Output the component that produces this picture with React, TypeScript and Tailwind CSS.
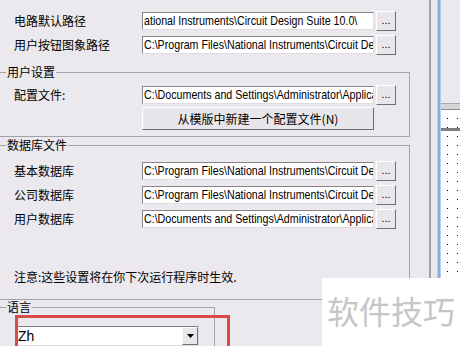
import type { ReactNode } from 'react'

const cjk = "font-['Noto_Sans_CJK_SC',sans-serif]"
const latin = "font-['Liberation_Sans',Arial,sans-serif]"

function PathInput({ value }: { value: string }) {
  return (
    <div className={`h-[18px] w-[232px] overflow-hidden whitespace-nowrap border border-[#858585] border-r-[#dedce0] border-b-[#dedce0] bg-white pl-[1px] text-[13px] leading-[16px] text-black ${latin}`}>
      {/* в оригинале узкий шрифт — сжимаем обычный */}
      <span className="inline-block origin-left scale-x-[0.82]">{value}</span>
    </div>
  )
}

function BrowseButton() {
  return (
    <div className={`ml-[2px] flex h-[20px] w-[20px] items-end justify-center border border-t-white border-l-white border-r-[#6f6f6f] border-b-[#6f6f6f] bg-[#e8e6ea] pb-[4px] text-[11px] leading-none text-black ${latin}`}>
      ...
    </div>
  )
}

function PathRow({ label, value }: { label: string; value: string }) {
  return (
    <div className="flex h-[20px] items-center pl-[14px]">
      <span className={`w-[128px] text-[12px] leading-[16px] text-black ${cjk}`}>{label}</span>
      <PathInput value={value} />
      <BrowseButton />
    </div>
  )
}

function Group({ title, className, children }: { title: string; className?: string; children: ReactNode }) {
  return (
    <div className={className}>
      <div className="flex h-[12px]">
        <div className="mt-[6px] w-[6px] border-t border-[#a3a2a6]" />
        <span className={`px-[1px] text-[12px] leading-[12px] text-black ${cjk}`}>{title}</span>
        <div className="mt-[6px] flex-1 border-t border-r border-[#a3a2a6]" />
      </div>
      <div className="border-r border-b border-[#a3a2a6]">{children}</div>
    </div>
  )
}

// точечная сетка справа — кусок холста схемы
function Dots({ id, dy, className }: { id: string; dy: number; className?: string }) {
  return (
    <svg className={`block w-full bg-white ${className ?? ''}`}>
      <defs>
        <pattern id={id} width="10" height="9" patternUnits="userSpaceOnUse">
          <rect x="6" y={dy} width="1" height="1" fill="#000" />
        </pattern>
      </defs>
      <rect width="100%" height="100%" fill={`url(#${id})`} />
    </svg>
  )
}

export default function App() {
  return (
    <div className="relative flex h-[346px] w-[460px] overflow-hidden bg-[#ebe9ed]">
      <div className="w-[429px] shrink-0 pt-[11px] pr-[19px]">
        <PathRow label="电路默认路径" value="ational Instruments\Circuit Design Suite 10.0\" />
        <div className="mt-[4px]">
          <PathRow label="用户按钮图象路径" value="C:\Program Files\National Instruments\Circuit Design Suite 10.0\" />
        </div>

        <Group title="用户设置" className="mt-[11px]">
          <div className="pt-[7px] pb-[6px]">
            <PathRow label="配置文件:" value="C:\Documents and Settings\Administrator\Application Data\" />
            <div className="mt-[2px] pl-[142px]">
              <div className={`flex h-[23px] w-[232px] items-center justify-center border border-t-white border-l-white border-r-[#6f6f6f] border-b-[#6f6f6f] bg-[#e8e6ea] text-[12px] text-black ${cjk}`}>
                从模版中新建一个配置文件(N)
              </div>
            </div>
          </div>
        </Group>

        <Group title="数据库文件" className="mt-[2px]">
          <div className="flex flex-col gap-[4px] pt-[10px]">
            <PathRow label="基本数据库" value="C:\Program Files\National Instruments\Circuit Design Suite 10.0\" />
            <PathRow label="公司数据库" value="C:\Program Files\National Instruments\Circuit Design Suite 10.0\" />
            <PathRow label="用户数据库" value="C:\Documents and Settings\Administrator\Application Data\" />
          </div>
          <p className={`mt-[40px] pb-[14px] pl-[14px] text-[12px] leading-[16px] text-black ${cjk}`}>
            注意:这些设置将在你下次运行程序时生效.
          </p>
        </Group>

        <Group title="语言" className="mt-[1px] w-[215px]">
          <div className="pt-[13px] pl-[16px] pb-[10px]">
            <div className="flex h-[20px] w-[183px] border border-[#808080] border-r-[#dedce0] border-b-[#dedce0] bg-white">
              <span className={`flex-1 pl-[1px] text-[14px] leading-[18px] text-black ${latin}`}>Zh</span>
              <div className="flex h-[18px] w-[16px] items-center justify-center border border-t-white border-l-white border-r-[#6f6f6f] border-b-[#6f6f6f] bg-[#e8e6ea]">
                <svg width="7" height="4" viewBox="0 0 7 4">
                  <path d="M0 0h7L3.5 4z" fill="#000" />
                </svg>
              </div>
            </div>
          </div>
        </Group>
      </div>

      <div className="w-[2px] shrink-0 bg-[#a09fa3]" />
      <div className="w-[6px] shrink-0" />
      <div className="w-[4px] shrink-0 border-x border-[#b2cdef] bg-[#86b0e0]" />
      <div className="flex min-w-0 flex-1 flex-col">
        <div className="h-[103px] shrink-0" />
        <div className="h-[7px] shrink-0 border-t border-b border-t-[#a9a9a9] border-b-[#8a8a8a] bg-[#d6d4d8]" />
        <Dots id="grid-a" dy={8} className="h-[18px] shrink-0" />
        <div className="h-[3px] shrink-0 bg-[#7c7c7c]" />
        <Dots id="grid-b" dy={5} className="flex-1" />
      </div>

      {/* красная рамка-выделение поверх поля языка */}
      <div className="absolute top-[315px] left-[15px] h-[40px] w-[215px] border-[3px] border-[#d94a4a]" />

      {/* водяной знак */}
      <div className="absolute top-[278px] left-[322px] h-[68px] w-[138px] bg-white pt-[16px] pl-[5px]">
        <span className={`text-[32px] leading-none text-[#c6c6c6] ${cjk}`}>软件技巧</span>
      </div>
    </div>
  )
}
